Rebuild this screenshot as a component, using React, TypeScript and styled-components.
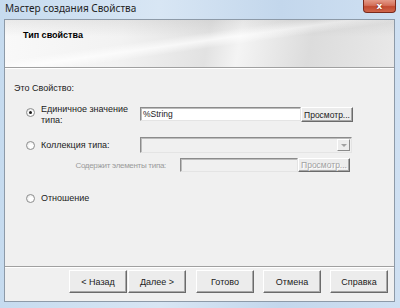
import styled, { createGlobalStyle } from "styled-components";

const GlobalStyle = createGlobalStyle`
  html, body {
    margin: 0;
    padding: 0;
    background: #b9d1ea;
  }
  * {
    box-sizing: border-box;
  }
`

const Window = styled.div`
  width: 400px;
  height: 308px;
  display: flex;
  flex-direction: column;
  padding: 0 5px 6px 4px;
  background: linear-gradient(to right, #c6dbef 0%, #d8e6f4 40%, #c3d7ec 70%, #cfe0f2 100%);
  font-family: "Liberation Sans", Arial, sans-serif;
  font-size: 9px;
  color: #1b1b1b;
  overflow: hidden;
`

const TitleBar = styled.div`
  height: 19px;
  display: flex;
  align-items: flex-start;
  justify-content: space-between;
`

const TitleText = styled.span`
  font-family: "Noto Sans", "Liberation Sans", sans-serif;
  font-size: 10px;
  line-height: 15px;
  padding: 1px 0 0 1px;
  color: #1e1e1e;
`

const CloseButton = styled.div`
  width: 33px;
  height: 13px;
  margin-right: -1px;
  display: flex;
  align-items: center;
  justify-content: center;
  border: 1px solid #7a2a1c;
  border-top: none;
  border-radius: 0 0 4px 4px;
  background: linear-gradient(to bottom, #e49a88 0%, #d4705a 45%, #c24a30 55%, #d0674c 100%);
  color: #ffffff;
  font-family: "DejaVu Sans", sans-serif;
  font-weight: bold;
  font-size: 9px;
  line-height: 1;
  text-shadow: 0 0 2px #6a1a0c;
`

const Client = styled.div`
  flex: 1;
  display: flex;
  flex-direction: column;
  border: 1px solid #8d9aa8;
  background: #f0f0f0;
`

const Header = styled.div`
  height: 48px;
  padding: 10px 0 0 18px;
  border-bottom: 1px solid #a0a0a0;
  box-shadow: 0 1px 0 #ffffff;
  background:
    linear-gradient(to bottom, rgba(120, 120, 120, 0.12) 0%, rgba(255, 255, 255, 0) 35%),
    linear-gradient(172deg, rgba(255, 255, 255, 0) 40%, rgba(255, 255, 255, 0.7) 48%, rgba(255, 255, 255, 0) 56%),
    linear-gradient(100deg, #f9f9f9 0%, #f2f2f2 30%, #e2e2e2 52%, #f4f4f4 60%, #dcdcdc 78%, #e9e9e9 100%);
`

const HeaderTitle = styled.div`
  font-weight: bold;
  font-size: 9px;
  color: #000000;
`

const Body = styled.div`
  flex: 1;
  margin-top: 1px;
  padding: 14px 0 0 9px;
  display: flex;
  flex-direction: column;
`

const Caption = styled.div`
  line-height: 11px;
  margin-bottom: 10px;
`

const OptionRow = styled.div<{ $align?: string; $gap?: number }>`
  display: flex;
  align-items: ${(p) => p.$align || "center"};
  margin-bottom: ${(p) => (p.$gap ?? 0)}px;
`

const Radio = styled.span<{ $checked?: boolean; $offset?: number }>`
  position: relative;
  flex: none;
  width: 9px;
  height: 9px;
  margin: ${(p) => p.$offset ?? 0}px 6px 0 12px;
  border-radius: 50%;
  border: 1px solid #8e8f8f;
  background: radial-gradient(circle at 60% 60%, #ffffff 30%, #dcdcdc 100%);

  &::after {
    content: "";
    display: ${(p) => (p.$checked ? "block" : "none")};
    position: absolute;
    left: 2px;
    top: 2px;
    width: 3px;
    height: 3px;
    border-radius: 50%;
    background: #1a1a1a;
  }
`

const OptionLabel = styled.span<{ $width?: number }>`
  width: ${(p) => (p.$width ? `${p.$width}px` : "auto")};
  line-height: 11px;
  flex: none;
`

const FieldGroup = styled.div<{ $top?: number }>`
  display: flex;
  margin-top: ${(p) => p.$top ?? 0}px;
`

const TextField = styled.div<{ $width: number; $disabled?: boolean }>`
  width: ${(p) => p.$width}px;
  height: 14px;
  padding: 1px 2px;
  border: 1px solid;
  border-color: #8b8b8b #e4e4e4 #e4e4e4 #8b8b8b;
  box-shadow: inset 1px 1px 0 #bcbcbc;
  background: ${(p) => (p.$disabled ? "#f0f0f0" : "#ffffff")};
  font-size: 8.5px;
  line-height: 10px;
  white-space: nowrap;
`

const Combo = styled.div`
  width: 212px;
  height: 16px;
  display: flex;
  justify-content: flex-end;
  padding: 1px;
  border: 1px solid;
  border-color: #8b8b8b #e4e4e4 #e4e4e4 #8b8b8b;
  box-shadow: inset 1px 1px 0 #bcbcbc;
  background: #f0f0f0;
`

const ComboArrow = styled.div`
  width: 13px;
  height: 12px;
  display: flex;
  align-items: center;
  justify-content: center;
  border: 1px solid;
  border-color: #ffffff #8b8b8b #8b8b8b #ffffff;
  background: #ececec;

  &::after {
    content: "";
    border-left: 3px solid transparent;
    border-right: 3px solid transparent;
    border-top: 3px solid #a0a0a0;
  }
`

const SmallButton = styled.div<{ $disabled?: boolean; $height: number }>`
  width: 52px;
  height: ${(p) => p.$height}px;
  display: flex;
  align-items: center;
  justify-content: center;
  border: 1px solid;
  border-color: #ffffff #6b6b6b #6b6b6b #ffffff;
  box-shadow: inset -1px -1px 0 #a8a8a8;
  background: #ececec;
  font-size: 8.5px;
  color: ${(p) => (p.$disabled ? "#a0a0a0" : "#1b1b1b")};
  text-shadow: ${(p) => (p.$disabled ? "1px 1px 0 #ffffff" : "none")};
`

const DimLabel = styled.span`
  width: 106px;
  color: #9b9b9b;
  font-size: 8px;
  letter-spacing: -0.3px;
  line-height: 11px;
  margin-left: 60px;
  padding-right: 14px;
  text-align: right;
  white-space: nowrap;
  flex: none;
`

const Footer = styled.div`
  height: 35px;
  display: flex;
  justify-content: flex-end;
  align-items: flex-start;
  padding: 3px 6px 0 0;
  border-top: 1px solid #a0a0a0;
  box-shadow: inset 0 1px 0 #ffffff;
`

const ButtonGroup = styled.div<{ $gap: number }>`
  display: flex;
  gap: ${(p) => p.$gap}px;
  margin-left: 10px;
`

const WizardButton = styled.div`
  width: 58px;
  height: 23px;
  display: flex;
  align-items: center;
  justify-content: center;
  border: 1px solid;
  border-color: #ffffff #6b6b6b #6b6b6b #ffffff;
  box-shadow: inset -1px -1px 0 #a8a8a8;
  background: #ececec;
  font-size: 9px;
  color: #1b1b1b;
`

const App = () => {
  return (
    <>
      <GlobalStyle />
      <Window>
        <TitleBar>
          <TitleText>Мастер создания Свойства</TitleText>
          <CloseButton>x</CloseButton>
        </TitleBar>

        <Client>
          <Header>
            <HeaderTitle>Тип свойства</HeaderTitle>
          </Header>

          <Body>
            <Caption>Это Свойство:</Caption>

            <OptionRow $align="flex-start" $gap={11}>
              <Radio $checked $offset={4} />
              <OptionLabel $width={99}>
                Единичное значение
                <br />
                типа:
              </OptionLabel>
              <FieldGroup $top={3}>
                <TextField $width={161}>%String</TextField>
                <SmallButton $height={15}>Просмотр...</SmallButton>
              </FieldGroup>
            </OptionRow>

            <OptionRow $gap={5}>
              <Radio />
              <OptionLabel $width={99}>Коллекция типа:</OptionLabel>
              <Combo>
                <ComboArrow />
              </Combo>
            </OptionRow>

            <OptionRow $gap={21}>
              <DimLabel>Содержит элементы типа:</DimLabel>
              <FieldGroup>
                <TextField $width={118} $disabled />
                <SmallButton $height={14} $disabled>Просмотр...</SmallButton>
              </FieldGroup>
            </OptionRow>

            <OptionRow>
              <Radio />
              <OptionLabel>Отношение</OptionLabel>
            </OptionRow>
          </Body>

          <Footer>
            <ButtonGroup $gap={1}>
              <WizardButton>&lt; Назад</WizardButton>
              <WizardButton>Далее &gt;</WizardButton>
            </ButtonGroup>
            <ButtonGroup $gap={9}>
              <WizardButton>Готово</WizardButton>
              <WizardButton>Отмена</WizardButton>
              <WizardButton>Справка</WizardButton>
            </ButtonGroup>
          </Footer>
        </Client>
      </Window>
    </>
  );
};

export default App;
